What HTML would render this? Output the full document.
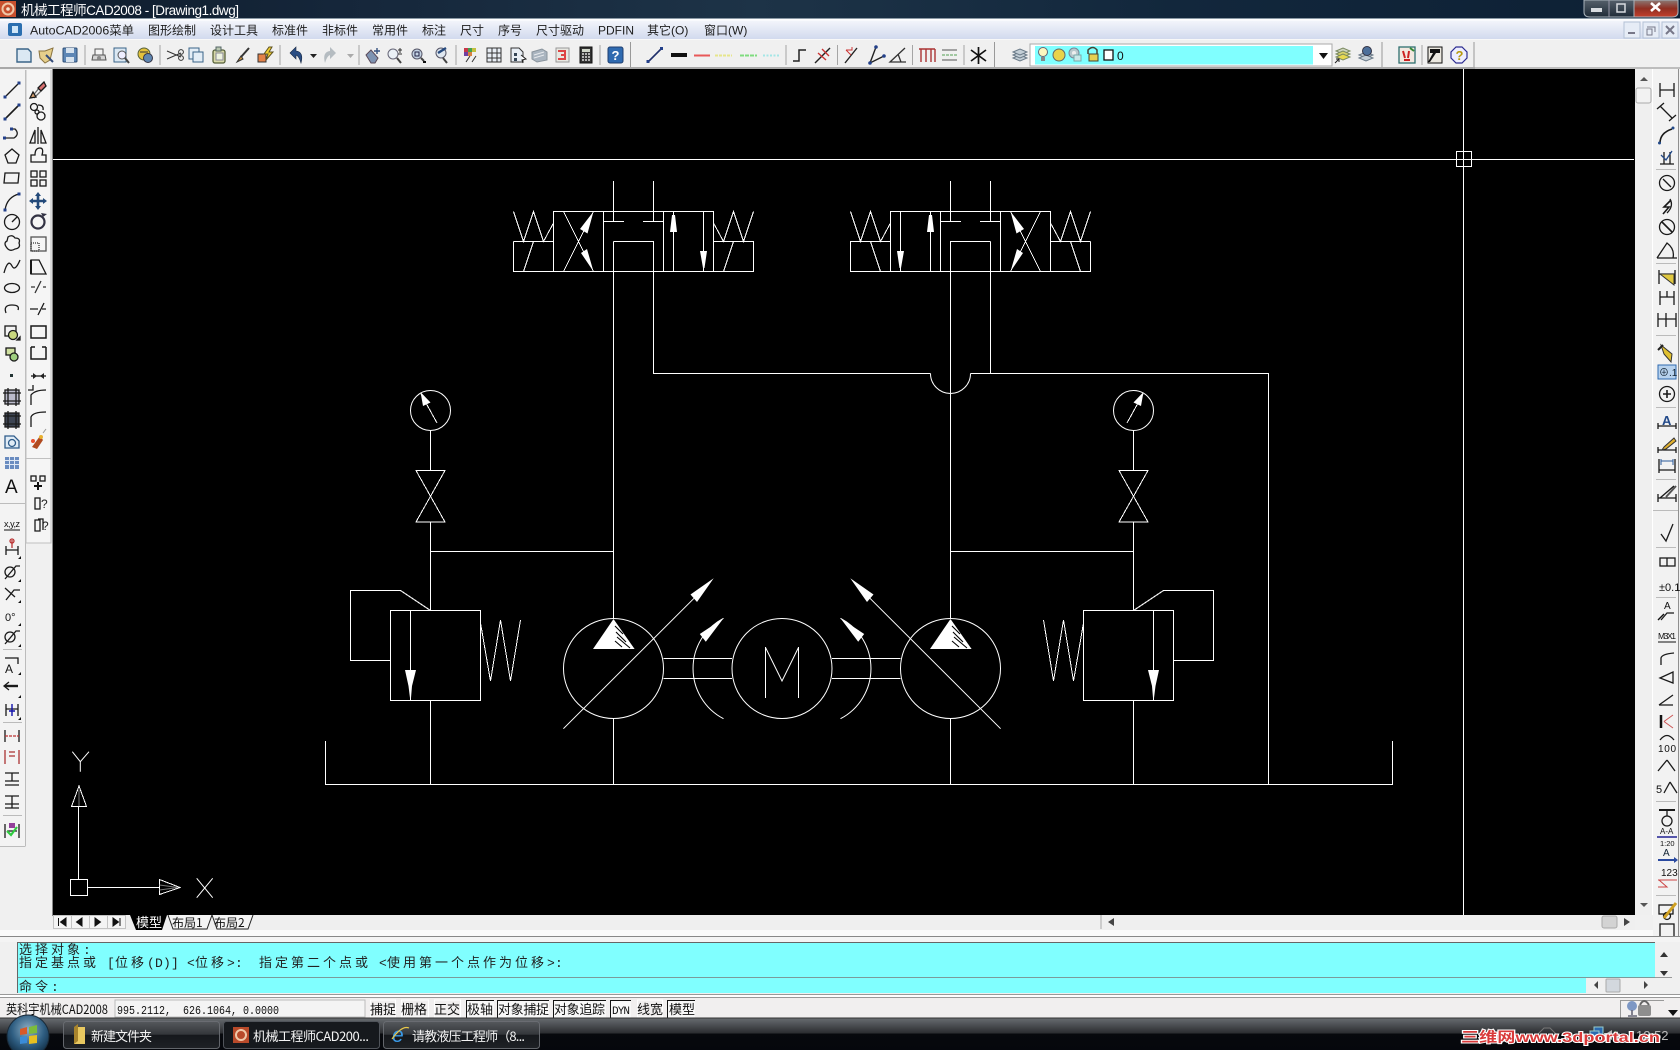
<!DOCTYPE html>
<html lang="zh"><head><meta charset="utf-8"><title>机械工程师CAD2008</title>
<style>
html,body{margin:0;padding:0;width:1680px;height:1050px;overflow:hidden;background:#f0f0f0}
svg{display:block;position:absolute;left:0;top:0}
text{font-family:"Liberation Sans","Noto Sans CJK SC",sans-serif;white-space:pre}
.m{font-size:12px;fill:#1c1c1c}
text.c{font-family:"Liberation Mono","Noto Sans CJK SC",monospace;font-size:13px;fill:#222}
text.s{font-family:"Noto Sans CJK SC",sans-serif;font-size:13px;fill:#111}
text.t{font-family:"Noto Sans CJK SC",sans-serif;font-size:13px}
text.t2{font-family:"Noto Sans CJK SC",sans-serif;font-size:12px}
text.mono{font-family:"Liberation Mono",monospace}
.k{fill:none;stroke:#1a1a1a;stroke-width:1.3}
.cad{fill:none;stroke:#fff;stroke-width:1;shape-rendering:crispEdges}
.w{fill:#fff;stroke:none}
</style></head><body>
<svg width="1680" height="1050" viewBox="0 0 1680 1050" xmlns="http://www.w3.org/2000/svg">
<defs>
<linearGradient id="tb" x1="0" x2="1" y1="0" y2="0"><stop offset="0" stop-color="#0e1c2b"/><stop offset=".2" stop-color="#15263a"/><stop offset=".45" stop-color="#1d3347"/><stop offset=".7" stop-color="#12273c"/><stop offset="1" stop-color="#0d2034"/></linearGradient>
<linearGradient id="mn" x1="0" x2="0" y1="0" y2="1"><stop offset="0" stop-color="#f3f5fb"/><stop offset="1" stop-color="#d2daee"/></linearGradient>
<linearGradient id="task" x1="0" x2="0" y1="0" y2="1"><stop offset="0" stop-color="#686c71"/><stop offset=".47" stop-color="#2c2e31"/><stop offset=".5" stop-color="#07090d"/><stop offset="1" stop-color="#05070c"/></linearGradient>
<linearGradient id="btn" x1="0" x2="0" y1="0" y2="1"><stop offset="0" stop-color="#55585c"/><stop offset=".48" stop-color="#33363a"/><stop offset=".5" stop-color="#15181c"/><stop offset="1" stop-color="#1e2125"/></linearGradient>
<linearGradient id="clo" x1="0" x2="0" y1="0" y2="1"><stop offset="0" stop-color="#8a7a76"/><stop offset=".5" stop-color="#8f2f22"/><stop offset="1" stop-color="#c4402c"/></linearGradient>
<linearGradient id="wb" x1="0" x2="0" y1="0" y2="1"><stop offset="0" stop-color="#55606a"/><stop offset="1" stop-color="#1f2b37"/></linearGradient>
<radialGradient id="orb" cx=".5" cy=".35" r=".7"><stop offset="0" stop-color="#8fb0c6"/><stop offset=".55" stop-color="#2f5e82"/><stop offset="1" stop-color="#0a2236"/></radialGradient>
<g id="v">
<path class="cad" d="M553.5 211.5H713.5V271.5H553.5ZM603.5 211.5V271.5M663.5 211.5V271.5M513.5 241.5H553.5M513.5 241.5V271.5H553.5M713.5 241.5H753.5V271.5H713.5M613.5 181V221.5M653.5 181V221.5M603.5 221.5H624M643 221.5H663.5M613.5 241.5H653.5V271.5M613.5 241.5V271.5M673.5 211.5V271.5M703.5 211.5V271.5"/>
<path class="cad" d="M513.5 211.5L523.5 241.5L533.5 211.5L543.5 241.5L553.5 223M713.5 223L723.5 241.5L733.5 211.5L743.5 241.5L753.5 211.5M523.5 271.5L533.5 241.5M723.5 271.5L733.5 241.5M563.5 211.5L593.5 271.5M593.5 211.5L563.5 271.5"/>
<path class="w" d="M593.5 211.5L580 229L587.5 233.5ZM593.5 271.5L581 253L587 249ZM672 215H675L677 232H670ZM700 251H707L704.5 268H703Z"/>
</g>
<g id="lo">
<path class="cad" d="M430.5 431V470.5M430.5 522V610.5M430.5 700V784M430.5 551.5H613.5M613.5 271.5V618M613.5 719V784M416 470.5H445L416 522H445ZM390.5 610.5H480.5V700.5H390.5ZM410.5 610.5V700M390 660.5H350.5V590.5H400.5L430.5 610.5M480.5 623L490.5 681L500.5 620L510.5 681L520.5 620M663.5 658.5H732M663.5 678.5H732M437 423L421 394"/>
<circle class="cad" cx="430.5" cy="410.5" r="20" style="shape-rendering:auto"/>
<circle class="cad" cx="613.5" cy="668.5" r="50" style="shape-rendering:auto"/>
<path class="w" d="M420.5 392L423 406L430.5 402.5ZM405 670H416L412 686L411 698H410L408.5 686ZM713.7 578.3L690.5 594.5L697 602ZM723.5 618.3L699.8 634L705.8 641.7Z"/>
<path class="cad" style="shape-rendering:auto" d="M563.4 728.7L694 598.3M723.5 618.3A56.6 56.6 0 0 0 723.5 718.7"/>
</g>
</defs>

<rect width="1680" height="1050" fill="#f0f0f0"/>

<!-- title bar -->
<rect width="1680" height="19" fill="url(#tb)"/>
<rect y="18" width="1680" height="1" fill="#8b9aa6"/>
<rect x="0" y="1" width="16" height="16" fill="#c8502e"/>
<circle cx="8" cy="9" r="5.5" fill="none" stroke="#f0c8a8" stroke-width="2"/><circle cx="8" cy="9" r="1.8" fill="#f4e3d0"/>
<text x="21" y="15" font-size="13.5" fill="#fff" textLength="218">机械工程师CAD2008 - [Drawing1.dwg]</text>
<path d="M1584 0H1634V17H1590Q1584 17 1584 12Z" fill="url(#wb)" stroke="#aab4bc"/>
<path d="M1634 0H1678V12Q1678 17 1672 17H1634Z" fill="url(#clo)" stroke="#aab4bc"/>
<path d="M1609 0V17" stroke="#99a" />
<rect x="1591" y="8" width="11" height="4" fill="#d8dce0"/>
<rect x="1617" y="4" width="8" height="8" fill="none" stroke="#d8dce0" stroke-width="1.5"/>
<path d="M1651 3L1660 11M1660 3L1651 11" stroke="#fff" stroke-width="2.6"/>

<!-- menu -->
<rect y="19" width="1680" height="1.5" fill="#fff"/>
<rect y="20.5" width="1680" height="18.5" fill="url(#mn)"/>
<rect x="8" y="23" width="14" height="13" rx="2" fill="#2b6fb0"/><rect x="12" y="26" width="6" height="7" fill="#cfe6f8"/>
<text class="m" x="30" y="34.500" textLength="104" lengthAdjust="spacingAndGlyphs">AutoCAD2006菜单</text><text class="m" x="148" y="34.500">图形绘制</text><text class="m" x="210" y="34.500">设计工具</text><text class="m" x="272" y="34.500">标准件</text><text class="m" x="322" y="34.500">非标件</text><text class="m" x="372" y="34.500">常用件</text><text class="m" x="422" y="34.500">标注</text><text class="m" x="460" y="34.500">尺寸</text><text class="m" x="498" y="34.500">序号</text><text class="m" x="536" y="34.500">尺寸驱动</text><text class="m" x="598" y="34.500">PDFIN</text><text class="m" x="647" y="34.500">其它(O)</text><text class="m" x="704" y="34.500">窗口(W)</text>
<g fill="#e6ecf6" stroke="#b4c2d6"><rect x="1624" y="22" width="16" height="16"/><rect x="1643" y="22" width="16" height="16"/><rect x="1662" y="22" width="16" height="16"/></g>
<path d="M1628 33H1635" stroke="#778" stroke-width="2"/><path d="M1647 27H1655V32M1647 29H1652V35H1647Z" fill="none" stroke="#778"/><path d="M1666 26L1674 34M1674 26L1666 34" stroke="#778" stroke-width="2"/>

<!-- toolbar band -->
<rect y="39" width="1680" height="28" fill="#f0f0f0"/>
<rect y="39" width="1680" height="1" fill="#f8f8f8"/>
<rect y="67" width="1475" height="2" fill="#a8a8a8"/>
<rect x="1475" y="67" width="205" height="2" fill="#bdbdbd"/>
<g stroke="#a5a5a5"><path d="M85 45V65M160 45V65M280 45V65M359 45V65M456 45V65M600 45V65M786 45V65M837.5 45V65M912.5 45V65M964 45V65M1422 45V65"/></g>
<g stroke="#999" stroke-width="1"><path d="M630.5 42V67M994.5 42V67M1382 42V67M1474 42V67"/></g>

<!-- toolbar icons -->
<g transform="translate(24,55)"><path d="M-7-6H4L7-3V7H-7Z" fill="#dbe8f3" stroke="#3a6488" stroke-width="1.4"/></g>
<g transform="translate(46,55)"><path d="M-7-4H-1L7-7L4 5L-1 8L-6 3Z" fill="#e6cf8b" stroke="#8b7440"/><path d="M0 0L7 7" stroke="#354c7a" stroke-width="2"/></g>
<g transform="translate(70,55)"><rect x="-7" y="-7" width="14" height="14" rx="1" fill="#5d86b5" stroke="#2d4d75"/><rect x="-4" y="-7" width="8" height="5" fill="#d6e2ee"/><rect x="-4" y="2" width="8" height="5" fill="#d6e2ee"/></g>
<g transform="translate(99,55)"><path d="M-6 0H6L7 5H-7Z" fill="#d5d5d5" stroke="#555"/><rect x="-4" y="-6" width="8" height="6" fill="#f4f4f4" stroke="#555"/><circle cx="0" cy="3" r="2" fill="#888"/></g>
<g transform="translate(121,55)"><rect x="-7" y="-7" width="12" height="14" fill="#dbe8f3" stroke="#3a6488"/><circle cx="1" cy="0" r="4" fill="#eef" stroke="#555"/><path d="M4 3L8 8" stroke="#444" stroke-width="2"/></g>
<g transform="translate(145,55)"><circle cx="-1" cy="-1" r="6" fill="#e3c23d" stroke="#55603a"/><circle cx="3" cy="3" r="4.5" fill="#5f86b0" stroke="#334"/><path d="M-5-3H3" stroke="#333"/></g>
<g transform="translate(175,55)"><path d="M-8-4L6 2M-8 4L6-2" fill="none" stroke="#333"/><circle cx="6" cy="-3" r="2.4" fill="none" stroke="#333"/><circle cx="6" cy="3" r="2.4" fill="none" stroke="#333"/></g>
<g transform="translate(196,55)"><rect x="-7" y="-7" width="10" height="11" fill="#e3edf6" stroke="#3a6488"/><rect x="-3" y="-3" width="10" height="10" fill="#e3edf6" stroke="#3a6488"/></g>
<g transform="translate(219,55)"><rect x="-6" y="-5" width="12" height="13" rx="2" fill="#d7d8a8" stroke="#56603a" stroke-width="1.3"/><rect x="-3" y="-8" width="5" height="4" fill="#b9c7b0" stroke="#566"/><rect x="-3" y="-2" width="7" height="7" fill="#eef3e0" stroke="#889"/></g>
<g transform="translate(243,55)"><path d="M6-7L-2 2" stroke="#333" stroke-width="2"/><path d="M-2 1L-6 7L0 4Z" fill="#c8923f" stroke="#333"/></g>
<g transform="translate(265,55)"><rect x="-7" y="-1" width="8" height="8" fill="#e38148" stroke="#333"/><path d="M4-8L-1-1H3L1 5L8-3H4L7-8Z" fill="#f2d132" stroke="#5c5020"/></g>
<path transform="translate(296,55)" d="M-6-2L0-8V-4Q8-3 5 8Q3 1 0 0V4Z" fill="#2b4e84" stroke="#1a2a45" stroke-width=".6"/>
<path d="M310 54H317L313.5 58Z" fill="#222"/>
<path transform="translate(330,55)" d="M6-2L0-8V-4Q-8-3-5 8Q-3 1 0 0V4Z" fill="#b5bcc1"/>
<path d="M347 54H354L350.5 58Z" fill="#aaa"/>
<g transform="translate(373,55)"><path d="M-7 0L-2-5L5 3L2 8H-2Z" fill="#7e93b2" stroke="#5a4a5a"/><path d="M4-7V-1M1-4H7" stroke="#35507e" stroke-width="1.4"/></g>
<g transform="translate(395,55)"><circle cx="-2" cy="-1" r="5" fill="#eaf0f6" stroke="#667"/><path d="M2 3L6 8" stroke="#444" stroke-width="2"/><path d="M5-7V-2M3-5H7M3-1H7" stroke="#333"/></g>
<g transform="translate(418,55)"><circle cx="-1" cy="-1" r="5" fill="#c4d3e4" stroke="#556"/><rect x="-3" y="-3" width="4" height="4" fill="none" stroke="#224"/><path d="M3 3L6 6" stroke="#444" stroke-width="2"/><path d="M5 6H8V8H5Z" fill="#111"/></g>
<g transform="translate(441,55)"><circle cx="0" cy="-2" r="5" fill="#dfe7ef" stroke="#556"/><path d="M-3-2L5-7" stroke="#274a7e" stroke-width="2.4"/><path d="M2 3L6 8" stroke="#444" stroke-width="2"/></g>
<g transform="translate(471,55)"><rect x="-7" y="-7" width="4" height="4" fill="#c8384a"/><rect x="-3" y="-7" width="4" height="4" fill="#44a050"/><rect x="1" y="-7" width="4" height="4" fill="#c4c040"/><rect x="-7" y="-3" width="4" height="4" fill="#7040a0"/><rect x="-3" y="-3" width="4" height="4" fill="#d88040"/><path d="M-5 7L-1 1M1 7L5 1" stroke="#333"/></g>
<g transform="translate(494,55)"><rect x="-7" y="-7" width="14" height="14" fill="#e8eef4" stroke="#333"/><path d="M-7-2H7M-7 3H7M-2-7V7M3-7V7" stroke="#333"/></g>
<g transform="translate(518,55)"><path d="M-7-7H1L5-3V7H-7Z" fill="#e8eef4" stroke="#333"/><rect x="-4" y="-2" width="3" height="3" fill="#345"/><rect x="-4" y="3" width="3" height="3" fill="#345"/><path d="M3 0L8 4L4 5L5 8" stroke="#222" fill="#fff"/></g>
<g transform="translate(539,55)"><path d="M-7-3L3-6L8-3V5L-2 7L-7 4Z" fill="#a9b4bf" stroke="#89939c"/><path d="M-5 0L5-3M-5 3L5 0" stroke="#e6e9ec"/></g>
<g transform="translate(563,55)"><rect x="-7" y="-7" width="13" height="14" fill="#e8e8e2" stroke="#999"/><path d="M-5-4H2V0H-2M2 0V4H-5" fill="none" stroke="#d44" stroke-width="2"/></g>
<g transform="translate(586,55)"><rect x="-6" y="-8" width="12" height="16" fill="#333" stroke="#111"/><rect x="-4" y="-6" width="8" height="3" fill="#cfd5c8"/><path d="M-4-1H4M-4 2H4M-4 5H4" stroke="#ddd" stroke-width="1.5" stroke-dasharray="2 1"/></g>
<g transform="translate(615,55)"><rect x="-7" y="-8" width="15" height="16" rx="2" fill="#2f6ab0" stroke="#1f3f70"/><text x="-3.5" y="5" font-size="13" font-weight="bold" fill="#fff">?</text></g>
<g transform="translate(655,55)"><path d="M-7 7L7-7" stroke="#1f2f6a" stroke-width="1.6"/><rect x="-8.5" y="5" width="3" height="3" fill="#23408a"/><rect x="5" y="-8" width="3" height="3" fill="#23408a"/></g>
<rect x="671" y="53" width="16" height="4" fill="#111"/>
<rect x="694" y="54.5" width="16" height="2" fill="#e85858"/>
<path d="M715 55.500H732" stroke="#e6e68c" stroke-width="2" stroke-dasharray="3 1"/>
<path d="M740 55.500H757" stroke="#7fdc7f" stroke-width="2" stroke-dasharray="4 1"/>
<path d="M763 55.500H780" stroke="#a4e6e6" stroke-width="2" stroke-dasharray="2 1.5"/>
<path d="M793 61H799V50H806" fill="none" stroke="#222" stroke-width="1.5"/>
<path d="M815 63L830 48" stroke="#222" stroke-width="1.4"/><path d="M818 53L826 60M822 49L829 56" stroke="#c33" stroke-width="1.4"/>
<path d="M845 63L857 48" stroke="#222" stroke-width="1.4"/><path d="M846 50L852 50L852 47M846 50L851 55" stroke="#c33" fill="none"/>
<path d="M876 47L870 63L884 56" fill="none" stroke="#222" stroke-width="1.4"/><circle cx="876" cy="47" r="1.8" fill="#23408a"/><circle cx="884" cy="56" r="1.8" fill="#23408a"/><circle cx="870" cy="63" r="1.8" fill="#23408a"/>
<path d="M905 48L890 62H906M898 54L901 62" fill="none" stroke="#333" stroke-width="1.3"/>
<path d="M919 49H935M921 49V62M926 49V62M931 49V62M935 49V62" stroke="#a33" stroke-width="1.4" fill="none"/>
<path d="M942 50H957M942 60H957" stroke="#888" stroke-width="1.5"/><path d="M942 55H957" stroke="#8b8" stroke-width="1.5" stroke-dasharray="3 1"/>
<path d="M978.5 47V64M971 50L986 61M986 50L971 61" stroke="#111" stroke-width="1.7"/>
<g transform="translate(1020,55)" stroke="#6a7a88" fill="#c3ced6"><path d="M-7 3L0 0L7 3L0 6Z"/><path d="M-7 0L0-3L7 0L0 3Z"/><path d="M-7-3L0-6L7-3L0 0Z"/></g>

<!-- layer combo -->
<rect x="1030" y="44" width="302" height="22" fill="#fff" stroke="#aaa"/>
<rect x="1035" y="46" width="278" height="18.500" fill="#80ffff"/>
<circle cx="1043" cy="52" r="4.500" fill="#fdf8c0" stroke="#667"/><path d="M1041 57H1045V61H1041Z" fill="#888"/>
<circle cx="1059" cy="55" r="6" fill="#e9d34a" stroke="#666"/>
<circle cx="1074" cy="53" r="5" fill="#b8c8cc" stroke="#789"/><circle cx="1074" cy="53" r="2" fill="#eee"/><rect x="1074" y="55" width="7" height="6" fill="#c8e8e8" stroke="#7aa"/>
<path d="M1088 54V50Q1093 45 1097 50V54" fill="none" stroke="#443" stroke-width="1.5"/><rect x="1089" y="54" width="9" height="7" fill="#e5d050" stroke="#443"/>
<rect x="1104" y="50" width="9" height="10" fill="#fff" stroke="#111" stroke-width="1.3"/>
<text x="1117" y="60" font-size="12" fill="#111">0</text>
<path d="M1319 53H1328L1323.5 59Z" fill="#111"/>
<g transform="translate(1343,54)"><g stroke="#7a8a60" fill="#cfd5c0"><path d="M-7-3L0-6L7-3L0 0Z"/><path d="M-7 0L0-3L7 0L0 3Z" fill="#d8d26a"/><path d="M-7 3L0 0L7 3L0 6Z" fill="#e8d850"/></g><path d="M-8 9L-4 5M-7 5H-4V8" stroke="#222" fill="none"/></g>
<g transform="translate(1366,54)"><g stroke="#6a7a88" fill="#c3ced6"><path d="M-7 1L0-2L7 1L0 4Z"/><path d="M-7 4L0 1L7 4L0 7Z"/></g><circle cx="1" cy="-3" r="4.500" fill="#4c6f9a" stroke="#334"/></g>
<g transform="translate(1407,55)"><rect x="-8" y="-8" width="16" height="16" fill="#f3e8e0" stroke="#2e7070" stroke-width="1.3"/><path d="M-4-4L-2 3M2-4L1 3M-3 5H3" stroke="#c22" stroke-width="2" fill="none"/><path d="M3-7L7-4" stroke="#383" stroke-width="2"/></g>
<g transform="translate(1435,55)"><rect x="-7" y="-8" width="14" height="16" fill="#ebe8e0" stroke="#111"/><path d="M-5-6H5V-2H1L-5 7H-7L-2-2H-5Z" fill="#111"/></g>
<g transform="translate(1459,55)"><path d="M-3-8H3L8-3V3L3 8H-3L-8 3V-3Z" fill="#eef" stroke="#2c2c90" stroke-width="1.2"/><text x="-3.500" y="5" font-size="13" font-weight="bold" fill="#b89a10">?</text></g>

<!-- drawing area -->
<rect x="52" y="69" width="1" height="847" fill="#888"/>
<rect x="53" y="69" width="1582" height="846" fill="#000"/>
<use href="#v"/>
<use href="#v" transform="matrix(-1 0 0 1 1604 0)"/>
<use href="#lo"/>
<use href="#lo" transform="matrix(-1 0 0 1 1564 0)"/>
<circle class="cad" style="shape-rendering:auto" cx="782" cy="668.5" r="50"/>
<path class="cad" d="M653.5 271.5V373.5H930.5M970.5 373.5H1268.5V784.5M990.5 271.5V373.5M325.5 741V784.5H1392.5V741M1463.5 69V915M53 159.5H1634M765.5 698V647M798.5 647V698"/>
<path class="cad" style="shape-rendering:auto" d="M930.5 373.5A20 20 0 0 0 970.5 373.5M765.5 647.5L782 681L798.5 647.5"/>
<rect class="cad" x="1456.5" y="151.5" width="15" height="15"/>
<g><path class="w" d="M613.5 619L593 649H634.6Z"/><path d="M615 626L623 634M616 632L626 642M617 637L630 648M615 641L622 647" stroke="#000" stroke-width="1.1"/>
<path class="w" d="M950.5 619L930 649H971.6Z"/><path d="M952 626L960 634M953 632L963 642M954 637L967 648M952 641L959 647" stroke="#000" stroke-width="1.1"/></g>

<!-- UCS -->
<rect class="cad" x="70.5" y="879.5" width="17" height="16"/>
<path class="cad" d="M78.5 879V806.5M87.5 887.5H159.5M71.5 806.5H86.5L79 786Z M159.5 879.5V894.5L180 887.5Z"/>
<path class="cad" style="shape-rendering:auto" d="M72.3 751.7L80.3 761.7L89 751.7M80.3 761.7V771.7M196.7 878.3L212.7 897.7M212.7 878.3L196.7 897.7"/>
<path d="M79 790V806M159.5 885L178 887.5M159.5 890L178 887.5" stroke="#777" fill="none"/>

<!-- tab row -->
<rect x="53" y="915" width="1582" height="15" fill="#efefef"/>
<rect x="53.5" y="915.5" width="72" height="13" fill="#f4f4f4" stroke="#c4c4c4"/>
<path d="M71.5 915V929M89.5 915V929M107.5 915V929" stroke="#c4c4c4"/>
<path d="M58.5 918V926M60.5 922L66 918V926ZM82 918V926L76.5 922ZM95 918V926L100.500 922ZM113 918V926L118.500 922ZM120 918V926" fill="#111" stroke="#111"/>
<path d="M130 915L136 930H162L167 915Z" fill="#000"/>
<path d="M168 915L173 929H207L212 915" fill="#f4f4f4" stroke="#222"/>
<path d="M212 915L217 929H248L253 915" fill="#f4f4f4" stroke="#222"/>
<text class="t" x="136" y="927" fill="#fff">模型</text>
<text class="t2" x="172" y="927" fill="#111">布局1</text>
<text class="t2" x="214" y="927" fill="#111">布局2</text>
<rect x="1100" y="915" width="2" height="14" fill="#ccc"/>
<path d="M1114 918V926L1108 922ZM1624 918V926L1630 922Z" fill="#444"/>
<rect x="1602" y="916" width="15" height="12" rx="2" fill="#d3d3d3" stroke="#aaa"/>

<!-- vertical scrollbar + docks -->
<rect x="1635" y="69" width="17" height="846" fill="#efefef"/>
<rect x="1636" y="88" width="15" height="15" rx="2" fill="#f2f2f2" stroke="#aaa"/>
<path d="M1640 81H1648L1644 77ZM1640 903H1648L1644 907Z" fill="#555"/>
<rect x="1652" y="69" width="1" height="846" fill="#fff"/>
<rect x="1653" y="69" width="25" height="868" fill="#f2f2f2"/>
<rect x="1678" y="69" width="1" height="868" fill="#8f8f8f"/>

<!-- left docks -->
<rect x="0" y="70" width="25" height="776" fill="#f3f3f3"/>
<path d="M25.5 70V846M0 846.5H25.500M0 503.5H25" stroke="#bcbcbc"/>
<rect x="26" y="70" width="25" height="473" fill="#f5f5f5"/>
<path d="M26 70V543H51V70M26 458.5H51" stroke="#c0c0c0" fill="none"/>
<path d="M3 649.5H22M3 722.5H22M3 815.5H22" stroke="#bbb"/>

<!-- left col 1 icons -->
<g class="k">
<path d="M5 97L19 83"/><path d="M5 119L19 105" stroke-width="1.6"/><path d="M4 138H14Q20 134 15 129H11" stroke="#222"/>
<path d="M12 149L19 155L16 163H8L5 155Z"/><path d="M5 173H19L18 183H4Z"/><path d="M5 210Q7 197 19 194"/>
<circle cx="12" cy="222" r="7.5"/><path d="M12 222L17 217"/>
<path d="M8 237Q12 234 15 238Q21 238 19 243Q21 248 15 249Q10 252 7 248Q3 243 7 241Z"/>
<path d="M4 273Q8 258 12 266Q15 272 20 260"/>
<ellipse cx="12" cy="288" rx="7.5" ry="4.5"/><path d="M6 313Q3 305 12 305Q20 305 18 310"/>
<rect x="5" y="326" width="11" height="10"/><circle cx="13" cy="335" r="4.500" fill="#c9d77f"/><path d="M17 340L20 337V340Z" fill="#111"/>
<rect x="6" y="348" width="9" height="7" fill="#cfe0a0"/><circle cx="14" cy="357" r="4" fill="#9fcf7f"/>
<rect x="10" y="374" width="3" height="3" fill="#233" stroke="none"/>
<rect x="5" y="390" width="14" height="14" fill="#bbc"/><path d="M3 393H21M3 401H21M8 388V406M16 388V406"/>
<rect x="5" y="413" width="14" height="14" fill="#3d4452"/><path d="M3 416H21M3 424H21M8 411V429M16 411V429"/>
<path d="M5 448V436H14L19 441V448Z" fill="#e1ecf6" stroke="#2f5c8a"/><circle cx="12" cy="443" r="3.500" stroke="#2f5c8a"/>
</g>
<g fill="#23408a"><rect x="3.500" y="95.500" width="3" height="3"/><rect x="17.500" y="81.500" width="3" height="3"/><rect x="3.500" y="117.500" width="3" height="3"/><rect x="17.500" y="103.500" width="3" height="3"/><rect x="3" y="136.500" width="3" height="3"/><rect x="10" y="127.500" width="3" height="3"/><rect x="3.500" y="208.500" width="3" height="3"/><rect x="17.500" y="192.500" width="3" height="3"/></g>
<g><rect x="5" y="457" width="14" height="12" fill="#6a8cc0"/><path d="M5 460.5H19M5 464.5H19M9.5 457V469M14.5 457V469" stroke="#dfe8f4"/></g>
<text x="5" y="493" font-size="19" fill="#111">A</text>
<text x="4" y="527" font-size="9" fill="#111" textLength="16">x,y,z</text><path d="M4 530H20" stroke="#111"/>
<g class="k">
<path d="M6 546V555M18 546V555M6 550H18"/><path d="M12 540V548" stroke="#b33"/><circle cx="12" cy="541" r="2" stroke="#b33"/>
<circle cx="10" cy="572" r="5"/><path d="M5 579L16 566L20 566"/>
<path d="M5 588L15 597M6 600L14 590L20 590"/>
<text x="5" y="621" font-size="11" fill="#111" stroke="none">0°</text>
<circle cx="10" cy="637" r="5"/><path d="M5 644L16 631L20 631"/>
<path d="M5 658H18V664"/>
<path d="M5 686H18" stroke-width="2.4"/><path d="M9 682L4 686L9 690"/>
<path d="M6 704V716M18 704V716M6 709H18"/>
<path d="M5 730V742M19 730V742" /><path d="M5 736H19" stroke="#b33" stroke-dasharray="3 1"/>
<path d="M5 750V764M19 750V764M9 752H15M9 756H15" stroke="#a33"/>
<path d="M5 773H19M5 781H19M5 785H19M12 773V781"/>
<path d="M5 796H19M5 804H19M5 808H19M12 796V808"/>
<path d="M5 824V838M19 824V838M7 831H17"/>
</g>
<text x="5" y="673" font-size="12" fill="#111">A</text>
<path d="M12 704L12 716M9 711H15" stroke="#11a" stroke-width="1.4"/>
<rect x="9" y="823" width="6" height="5" fill="#93409a"/><path d="M7 831L11 835L17 827" fill="none" stroke="#2ecc40" stroke-width="2.2"/>
<g fill="#111"><path d="M21 556V559H18ZM21 579V582H18ZM21 600V603H18ZM21 623V626H18ZM21 644V647H18ZM21 672V675H18ZM21 695V698H18ZM21 717V720H18Z"/></g>

<!-- left col 2 icons -->
<g class="k">
<path d="M31 98L44 82M34 98L46 86" stroke="#666"/><path d="M30 98L36 97L33 92Z" fill="#d8a070"/><path d="M38 88L44 82L46 86L41 91Z" fill="#d87070"/>
<circle cx="34" cy="107" r="3.500"/><circle cx="41" cy="116" r="4"/><circle cx="37" cy="112" r="2"/><path d="M38 105Q44 105 43 110"/>
<path d="M38 127V144M35 130L30 143H35ZM41 130L46 143H41Z"/>
<path d="M31 162V155H35Q35 148 40 148Q44 148 42 155H46V162Z"/>
<rect x="31" y="171" width="6" height="6"/><rect x="40" y="171" width="6" height="6"/><rect x="31" y="180" width="6" height="6"/><rect x="40" y="180" width="6" height="6"/>
<circle cx="38" cy="222" r="6.5" stroke-width="2.2" stroke="#334"/>
<rect x="31" y="237" width="15" height="14" stroke="#555"/><rect x="31" y="243" width="8" height="8" stroke="#333" stroke-dasharray="1 1"/>
<path d="M31 260V274H46L39 260Z"/><path d="M31 260V274" stroke-width="2"/>
<path d="M31 287H35M43 287H46M35 293L41 281" stroke="#333"/>
<path d="M30 309H38M42 309H46M38 315L44 303"/>
<rect x="31" y="326" width="15" height="12" stroke-width="1.5"/>
<path d="M31 347V359H46V347M31 347H35M42 347H46" stroke-width="1.5"/>
<path d="M31 376H46"/>
<path d="M31 405V395Q35 390 46 390M33 385V390H28"/>
<path d="M31 427V417Q33 412 46 412"/>
</g>
<path d="M38 194V208M31 201H45" stroke="#234a7a" stroke-width="2.6"/><path d="M38 192L35 196H41ZM38 210L35 206H41ZM29 201L33 198V204ZM47 201L43 198V204Z" fill="#234a7a"/>
<path d="M43 217L41 213L47 214Z" fill="#334"/>
<path d="M33 373L37 376L33 379ZM44 373L40 376L44 379Z" fill="#222"/>
<path d="M32 447L40 436L43 440L37 449Z" fill="#b04a20"/><circle cx="41" cy="437" r="2" fill="#e8b030"/><circle cx="33" cy="441" r="2" fill="#e85030"/><path d="M43 433L46 429" stroke="#999"/>
<g class="k"><rect x="31" y="476" width="5" height="5"/><rect x="40" y="476" width="5" height="5"/><rect x="35" y="498" width="5" height="11" /><path d="M35 520H40V531H35ZM38 519H43V530"/></g>
<path d="M38 482V490M34 486H42" stroke="#111" stroke-width="2"/>
<text x="41" y="508" font-size="12" fill="#222">?</text><text x="42" y="530" font-size="12" fill="#222">?</text>

<!-- right dock icons -->
<path d="M1656 169.5H1676M1656 263.5H1676M1656 335.5H1676M1656 407.5H1676M1656 479.5H1676M1653 510.5H1678M1656 547.5H1676M1656 597.5H1676M1656 801.5H1676M1656 895.5H1676" stroke="#bbb" stroke-width="1"/>
<g class="k" stroke-width="1.4">
<path d="M1660 83V97M1674 83V97M1660 90H1674"/>
<path d="M1660 106L1672 118M1657 109L1664 103M1669 121L1676 115"/>
<path d="M1660 143Q1660 133 1672 129" stroke-width="1.6"/>
<path d="M1660 164H1674M1664 152V164M1670 152V164"/><path d="M1661 155L1666 160L1672 151" stroke="#234a8a"/>
<circle cx="1667" cy="183" r="7.500"/><path d="M1663 179L1671 187"/>
<path d="M1670 199Q1674 206 1667 213"/><path d="M1671 200L1664 207L1669 207L1663 214" stroke-width="1.6"/>
<circle cx="1667" cy="227" r="7.500"/><path d="M1662 222L1672 232" stroke-width="1.6"/>
<path d="M1657 258H1677M1657 258L1667 243Q1675 249 1673 258"/>
<path d="M1659 270V284M1675 270V284M1659 274H1675"/>
<path d="M1660 291V305M1674 291V305M1660 297H1674M1667 291V297"/>
<path d="M1658 313V327M1666 313V327M1676 313V327M1658 319H1676"/>
<circle cx="1667" cy="394" r="7.500"/><path d="M1667 390V398M1663 394H1671" stroke-width="1.6"/>
<path d="M1658 423V429M1676 423V429M1658 426H1676M1658 447V453M1676 447V453M1658 450H1676M1659 459V473M1675 459V473M1659 470H1675"/>
<path d="M1658 494V502M1676 494V502M1658 498H1676"/>
<path d="M1660 498L1674 486" stroke-width="1.4"/>
<path d="M1661 534L1666 541L1673 524"/>
<rect x="1660" y="558" width="15" height="8"/><path d="M1667 558V566"/>
<path d="M1661 620L1667 613H1674"/>
<path d="M1661 665V658Q1662 654 1674 653"/>
<path d="M1660 678L1673 672V683Z"/>
<path d="M1659 705L1673 695M1659 705H1673"/>
<path d="M1660 740Q1667 731 1674 740"/>
<path d="M1667 760L1658 771M1667 760L1675 771"/>
<path d="M1670 782L1664 793M1670 782L1677 793"/>
<circle cx="1667" cy="821" r="5"/><path d="M1659 810H1675" stroke-width="2"/><path d="M1667 810V816"/>
<rect x="1659" y="905" width="14" height="9"/><rect x="1660" y="924" width="14" height="16"/>
<circle cx="1667" cy="916" r="3.500"/>
</g>
<circle cx="1659.500" cy="143" r="1.500" fill="#234a8a"/><circle cx="1673" cy="128" r="1.500" fill="#234a8a"/>
<text x="1662" y="425" font-size="13" font-weight="bold" fill="#234a8a">A</text>
<path d="M1661 345L1672 354L1671 362L1664 354Z" fill="#e0c030" stroke="#333"/><path d="M1658 350L1663 345" stroke="#222" stroke-width="2"/>
<path d="M1660 274L1674 285V274Z" fill="#e0c840" stroke="#333"/>
<rect x="1658" y="365" width="18" height="14" fill="#b7d2ee" stroke="#2f6ab0"/><text x="1659" y="376" font-size="10" fill="#123">⊕.1</text>
<path d="M1674 438L1664 447L1662 450L1666 449L1676 441Z" fill="#e0b030" stroke="#333"/>
<path d="M1661 461H1673M1661 459V465M1673 459V465" stroke="#2a5a9a" fill="none"/>
<path d="M1676 486L1666 497" stroke="#555" stroke-width="2"/>
<text x="1659" y="591" font-size="11" fill="#111">±0.1</text>
<text x="1664" y="609" font-size="10" fill="#111">A</text><path d="M1658 620L1664 614" stroke="#111" stroke-width="1.400"/>
<text x="1658" y="639" font-size="8.5" fill="#111" textLength="18">M3X1</text><path d="M1658 642H1676" stroke="#111"/>
<path d="M1661 715V728" stroke="#111" stroke-width="2.500"/><path d="M1664 721.500L1673 715M1664 721.500L1673 728" stroke="#c55" fill="none"/>
<text x="1658" y="752" font-size="10" fill="#111" textLength="18">100</text>
<text x="1656" y="793" font-size="11" fill="#111">5</text>
<text x="1660" y="834" font-size="8" fill="#111">A-A</text><path d="M1657 837H1677" stroke="#55a" stroke-width="2"/><text x="1660" y="846" font-size="7.500" fill="#111">1:20</text>
<text x="1663" y="856" font-size="10" fill="#123">A</text><path d="M1658 860H1675" stroke="#2a4aa0" stroke-width="2"/><path d="M1674 857L1678 860L1674 863Z" fill="#2a4aa0"/>
<text x="1661" y="876" font-size="10" fill="#111">123</text><path d="M1658 880H1677M1658 887H1667L1659 880" stroke="#c44" fill="none"/>
<path d="M1664 918L1676 903" stroke="#d0a020" stroke-width="3"/>

<!-- command window -->
<rect x="0" y="930" width="1653" height="6" fill="#fafafa"/>
<rect y="936" width="1680" height="1" fill="#888"/>
<rect y="937" width="1680" height="5" fill="#f4f4f4"/>
<rect x="17" y="942" width="1638" height="51" fill="#80ffff"/>
<rect x="17" y="942" width="1638" height="1" fill="#666"/>
<rect x="17" y="942" width="1" height="51" fill="#666"/>
<rect x="18" y="977" width="1637" height="1" fill="#7b9b9b"/>
<rect x="1586" y="978" width="69" height="15" fill="#f0f0f0"/>
<rect x="1655" y="942" width="17" height="51" fill="#f0f0f0"/>
<rect x="1655" y="977" width="17" height="1" fill="#999"/>
<path d="M1660 957H1668L1664 952ZM1660 971H1668L1664 976Z" fill="#333"/>
<path d="M1598 981V989L1594 985ZM1644 981V989L1648 985Z" fill="#444"/>
<rect x="1606" y="979" width="14" height="13" rx="1" fill="#d3d8de" stroke="#aaa"/>
<text class="c" x="19 35 51 67 83" y="954">选择对象:</text>
<text class="c" x="19 35 51 67 83 107 115 131 147 155 163 171 187 195 211 227 235 259 275 291 307 323 339 355 379 387 403 419 435 451 467 483 499 515 531 547 555" y="967">指定基点或[位移(D)]&lt;位移&gt;:指定第二个点或&lt;使用第一个点作为位移&gt;:</text>
<text class="c" x="19 35 51" y="991">命令:</text>

<!-- status bar -->
<rect y="994" width="1680" height="1" fill="#999"/>
<rect y="995" width="1680" height="2" fill="#fff"/>
<rect y="997" width="1680" height="1" fill="#999"/>
<rect y="998" width="1680" height="20" fill="#f1efef"/>
<text class="s" x="6" y="1014" textLength="102" lengthAdjust="spacingAndGlyphs">英科宇机械CAD2008</text>
<rect x="115" y="1000" width="250" height="17" fill="#f4f4f4" stroke="#bbb"/>
<text class="mono" x="117" y="1014" font-size="12" fill="#111" textLength="162" lengthAdjust="spacingAndGlyphs">995.2112,  626.1064, 0.0000</text>
<g fill="none" stroke="#fff"><rect x="370.5" y="1000" width="25" height="17"/><rect x="401.5" y="1000" width="27" height="17"/><rect x="434.5" y="1000" width="26" height="17"/><rect x="637.5" y="1000" width="25" height="17"/></g>
<g fill="#f8f8f8"><rect x="466" y="1000" width="28" height="18"/><rect x="497" y="1000" width="52" height="18"/><rect x="553" y="1000" width="53" height="18"/><rect x="610" y="1000" width="21" height="18"/><rect x="667" y="1000" width="28" height="18"/></g>
<path d="M466.5 1018V1000.5H494M497.5 1018V1000.5H549M553.5 1018V1000.5H606M610.5 1018V1000.5H631M667.5 1018V1000.5H695" fill="none" stroke="#111"/>
<text class="s" x="370" y="1014">捕捉</text><text class="s" x="401" y="1014">栅格</text><text class="s" x="434" y="1014">正交</text><text class="s" x="467" y="1014">极轴</text><text class="s" x="498" y="1014" textLength="51">对象捕捉</text><text class="s" x="554" y="1014" textLength="51">对象追踪</text><text class="mono" x="612" y="1014" font-size="11" fill="#111" textLength="18">DYN</text><text class="s" x="637" y="1014">线宽</text><text class="s" x="669" y="1014">模型</text>
<path d="M1620.5 1018V1000.5H1664" fill="none" stroke="#999"/>
<circle cx="1632" cy="1006" r="5" fill="#7d97c4"/><path d="M1632 1010V1015M1628 1016H1637" stroke="#667" stroke-width="1.6"/>
<rect x="1638" y="1005" width="13" height="11" rx="2" fill="#8e8e8e"/><path d="M1640 1005Q1644 997 1649 1005" fill="none" stroke="#666" stroke-width="2"/>
<path d="M1668 1010H1678L1673 1016Z" fill="#111"/>

<!-- taskbar -->
<rect y="1018" width="1680" height="32" fill="url(#task)"/>
<rect y="1017.5" width="1680" height="1" fill="#333"/>
<g stroke="#6b6f74" stroke-opacity=".9"><rect x="63.5" y="1021.5" width="156" height="27" rx="3" fill="url(#btn)"/><rect x="383.5" y="1021.5" width="156" height="27" rx="3" fill="url(#btn)"/></g>
<rect x="223.5" y="1021.5" width="156" height="27" rx="3" fill="#16191d" stroke="#50545a"/>
<circle cx="28" cy="1036" r="21" fill="url(#orb)" stroke="#1a2a38"/>
<g><path d="M20 1029L27 1027V1034L20 1035Z" fill="#d85a2a"/><path d="M29 1027L37 1025V1033L29 1034Z" fill="#7cbc3c"/><path d="M20 1037L27 1036V1043L20 1044Z" fill="#3a8cd8"/><path d="M29 1036L37 1035V1043L29 1044Z" fill="#e8c020"/></g>
<path d="M74 1027H85V1044H74Z" fill="#e8c860"/><path d="M74 1027L78 1024V1041L74 1044Z" fill="#a8842c"/>
<text class="t" x="91" y="1041" fill="#f4f4f4" textLength="61">新建文件夹</text>
<rect x="233" y="1027" width="16" height="16" fill="#b84a2a"/><circle cx="241" cy="1035" r="5" fill="none" stroke="#f0c8a8" stroke-width="2"/>
<text class="t" x="253" y="1041" fill="#f4f4f4" textLength="116">机械工程师CAD200...</text>
<g transform="translate(400,1035)"><text x="-8" y="7" font-size="21" font-style="italic" fill="#3a9ae8">e</text><path d="M-8 4Q2-10 9-7" fill="none" stroke="#e8c84a" stroke-width="1.2"/></g>
<text class="t" x="412" y="1041" fill="#f4f4f4" textLength="113">请教液压工程师（8...</text>
<!-- tray -->
<rect x="1594" y="1027" width="9" height="8" fill="#2a6ab0" stroke="#9cc"/><rect x="1590" y="1031" width="9" height="8" fill="#2a6ab0" stroke="#9cc"/>
<path d="M1612 1030V1040L1607 1037H1604V1033H1607Z" fill="#bbb"/><path d="M1615 1031Q1618 1035 1615 1039" stroke="#5a5" fill="none"/>
<path d="M1538 1034L1544 1028H1550L1556 1034" fill="none" stroke="#777"/>
<text x="1636" y="1040" font-size="13" fill="#bbb">12:52</text>
<text x="1461" y="1042" font-size="14" font-weight="bold" fill="#d93a3a" stroke="#fff" stroke-width="2" paint-order="stroke" textLength="199" lengthAdjust="spacingAndGlyphs">三维网www.3dportal.cn</text>
</svg>
</body></html>
